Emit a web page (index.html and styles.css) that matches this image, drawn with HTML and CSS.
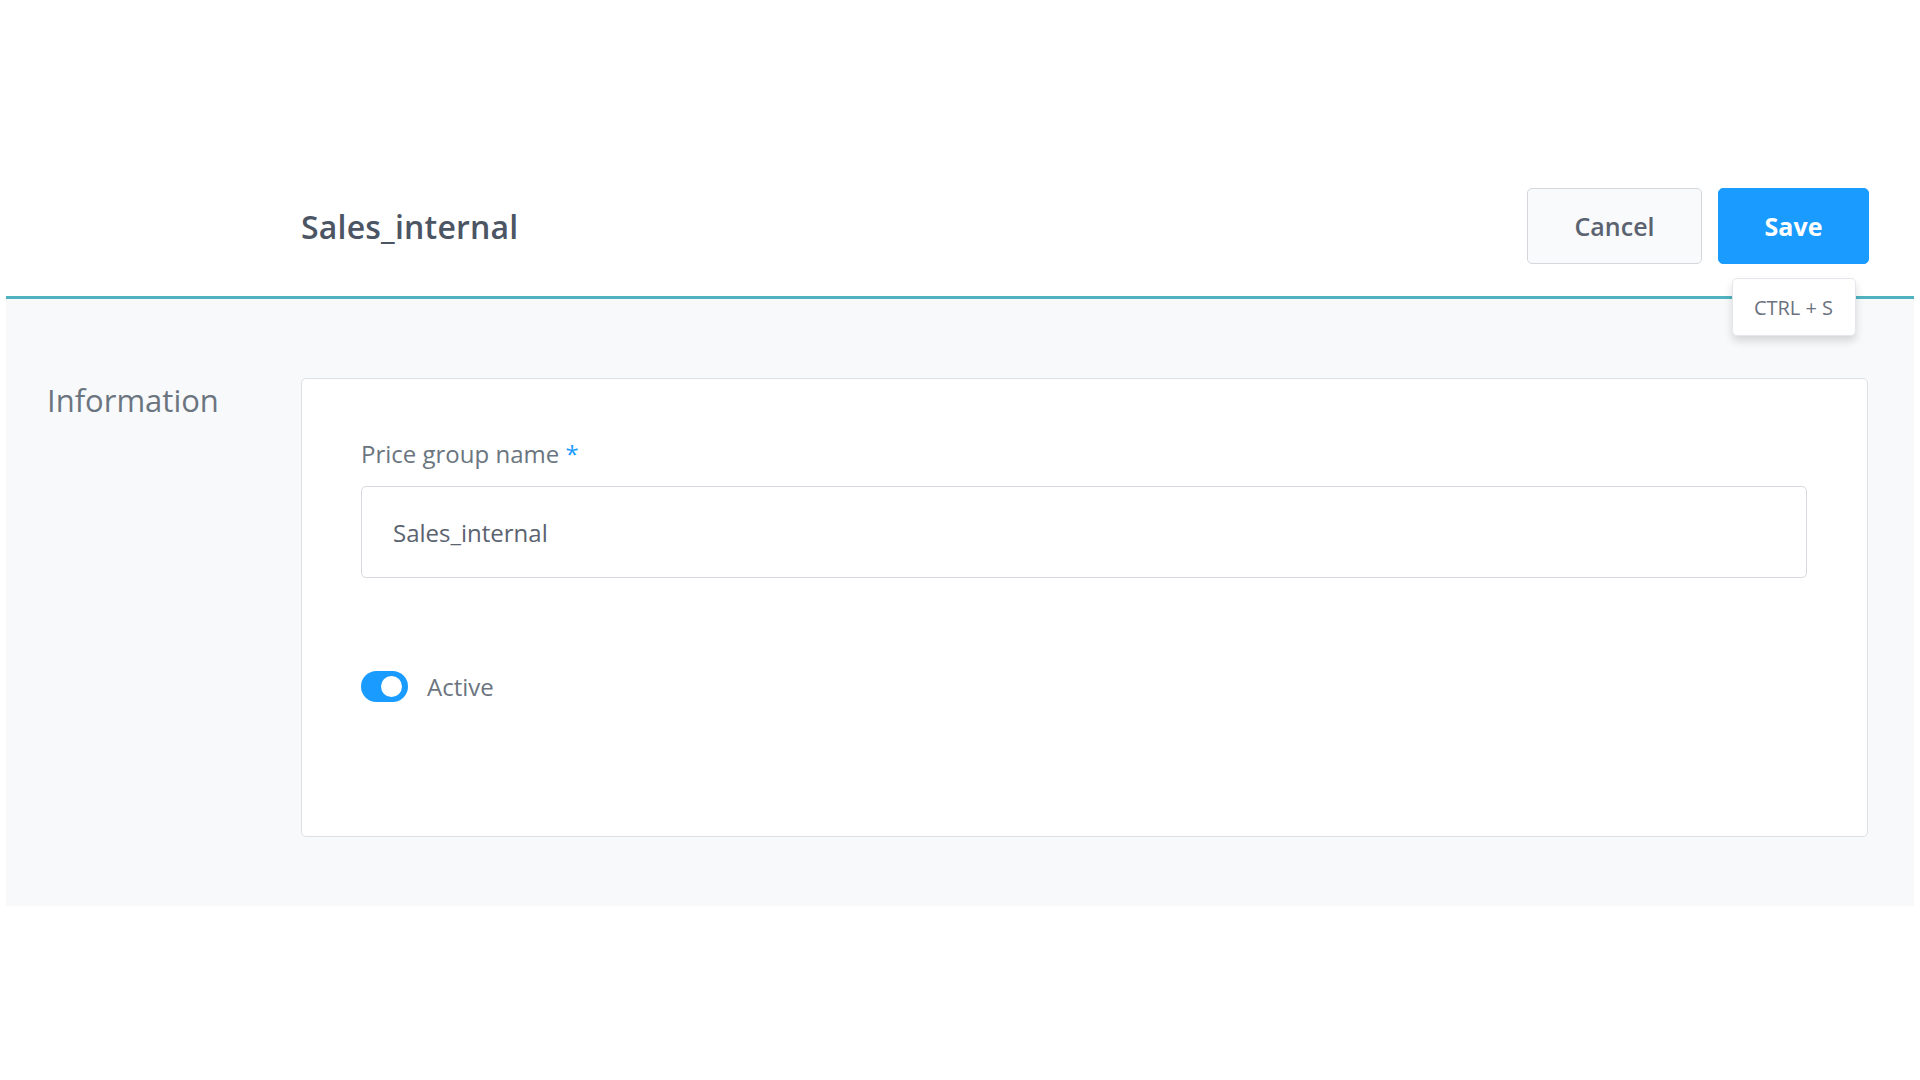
FILE: index.html
```html
<!DOCTYPE html>
<html lang="en">
<head>
<meta charset="utf-8">
<title>Sales_internal</title>
<link rel="stylesheet" href="styles.css">
</head>
<body>
<div class="page">
  <header class="header">
    <h1 class="title">Sales_internal</h1>
    <div class="actions">
      <button class="btn btn-cancel" type="button">Cancel</button>
      <div class="save-wrap">
        <button class="btn btn-save" type="button">Save</button>
        <div class="tooltip">CTRL + S</div>
      </div>
    </div>
  </header>
  <main class="content">
    <h2 class="section-title">Information</h2>
    <section class="card">
      <label class="field-label" for="pg-name">Price group name <span class="req">*</span></label>
      <input class="field-input" id="pg-name" type="text" value="Sales_internal">
      <div class="toggle-row">
        <span class="toggle"><span class="knob"></span></span>
        <span class="toggle-label">Active</span>
      </div>
    </section>
  </main>
</div>
</body>
</html>
```
FILE: styles.css
```css
* { box-sizing: border-box; }
html, body { margin: 0; padding: 0; background: #ffffff; }
body { font-family: "Open Sans", "Noto Sans", sans-serif; }

.page { margin: 0 6px; }

.header {
  height: 299px;
  display: flex;
  align-items: center;
  justify-content: space-between;
  padding: 156px 45px 0 295px;
  border-bottom: 3px solid #4fb3bf;
  position: relative;
}
.title {
  margin: 0;
  font-size: 32px;
  font-weight: 600;
  color: #4b5563;
  letter-spacing: 0.2px;
}
.actions { display: flex; gap: 16px; align-items: center; }
.save-wrap { position: relative; }
.btn {
  height: 76px;
  border-radius: 5px;
  font-family: inherit;
  font-size: 25px;
  font-weight: 600;
  cursor: pointer;
}
.btn-cancel {
  width: 175px;
  background: #f9fafb;
  border: 1.5px solid #d3d7dc;
  color: #5b6370;
}
.btn-save {
  width: 151px;
  background: #1a9bff;
  border: 1px solid #1a9bff;
  color: #ffffff;
  font-weight: 700;
}
.tooltip {
  position: absolute;
  top: 90px;
  left: 50%;
  transform: translateX(-50%);
  width: 124px;
  height: 58px;
  display: flex;
  align-items: center;
  justify-content: center;
  background: #ffffff;
  border: 1px solid #e4e7eb;
  border-radius: 5px;
  box-shadow: 0 5px 8px rgba(0, 0, 0, 0.14);
  font-size: 20px;
  color: #6b7280;
  z-index: 2;
}

.content {
  background: #f8f9fb;
  display: grid;
  grid-template-columns: 254px 1fr;
  padding: 79px 46px 69px 41px;
}
.section-title {
  margin: 0;
  font-size: 31px;
  font-weight: 400;
  color: #6b7580;
  line-height: 44px;
}
.card {
  background: #ffffff;
  border: 1.5px solid #dde0e4;
  border-radius: 5px;
  padding: 59px 60px 133px 59px;
  display: flex;
  flex-direction: column;
}
.field-label {
  font-size: 24px;
  line-height: 32px;
  color: #6b7580;
}
.req { color: #1a9bff; }
.field-input {
  margin-top: 16px;
  height: 92px;
  width: 100%;
  border: 1.5px solid #d7dbe0;
  border-radius: 5px;
  padding: 0 31px;
  font-family: inherit;
  font-size: 24px;
  color: #5b6370;
  background: #ffffff;
  outline: none;
}
.toggle-row {
  margin-top: 92px;
  display: flex;
  align-items: center;
  gap: 19px;
}
.toggle {
  width: 47px;
  height: 31px;
  border-radius: 16px;
  background: #1a9bff;
  display: flex;
  align-items: center;
  justify-content: flex-end;
  padding-right: 6px;
}
.knob {
  width: 21px;
  height: 21px;
  border-radius: 50%;
  background: #ffffff;
}
.toggle-label {
  font-size: 24px;
  color: #6b7580;
}
```
